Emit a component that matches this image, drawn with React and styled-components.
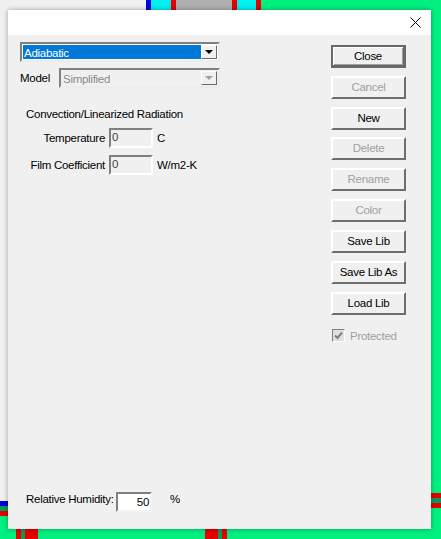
import * as React from 'react';
import styled, { createGlobalStyle, css } from 'styled-components';

const GlobalStyle = createGlobalStyle`
  html, body {
    margin: 0;
    padding: 0;
  }
  body {
    font-family: "Liberation Sans", Arial, sans-serif;
    font-size: 11.5px;
    letter-spacing: -0.28px;
    color: #000;
  }
`;

const strip = (color, x, y, w, h) => `linear-gradient(${color}, ${color}) ${x}px ${y}px / ${w}px ${h}px no-repeat`;

// whatever other windows are behind the dialog, only the edges show
const Desktop = styled.div`
  width: 441px;
  height: 539px;
  overflow: hidden;
  box-sizing: border-box;
  padding: 10px 10px 10px 8px;
  background:
    ${strip('#0000e0', 146, 0, 5, 10)},
    ${strip('#00f0f0', 151, 0, 20, 10)},
    ${strip('#e80000', 171, 0, 5, 10)},
    ${strip('#b0b0b0', 176, 0, 56, 10)},
    ${strip('#e80000', 232, 0, 5, 10)},
    ${strip('#00f0f0', 237, 0, 19, 10)},
    ${strip('#e80000', 256, 0, 5, 10)},
    ${strip('#f0f0f0', 0, 0, 146, 10)},
    ${strip('#0000e0', 0, 501, 8, 5)},
    ${strip('#0a9a5a', 0, 506, 8, 5)},
    ${strip('#e80000', 0, 511, 8, 5)},
    ${strip('#f0f0f0', 0, 0, 8, 501)},
    ${strip('#e80000', 431, 493, 10, 5)},
    ${strip('#0a9a5a', 431, 498, 10, 5)},
    ${strip('#e80000', 431, 503, 10, 5)},
    ${strip('#e80000', 16, 529, 5, 10)},
    ${strip('#0a9a5a', 21, 529, 4, 10)},
    ${strip('#e80000', 25, 529, 8, 10)},
    ${strip('#e80000', 33, 529, 5, 10)},
    ${strip('#e80000', 205, 529, 13, 10)},
    ${strip('#0a9a5a', 218, 529, 4, 10)},
    ${strip('#e80000', 222, 529, 5, 10)},
    #00f080;
`;

const Window = styled.div`
  width: 423px;
  height: 519px;
  display: flex;
  flex-direction: column;
  background: #f0f0f0;
  box-shadow: 0 0 5px rgba(0, 0, 0, 0.35);
`;

const TitleBar = styled.div`
  height: 25px;
  flex: none;
  display: flex;
  justify-content: flex-end;
  align-items: center;
  padding-right: 10px;
  background: #fff;
`;

const Body = styled.div`
  flex: 1;
  display: flex;
  min-height: 0;
  padding: 7px 25px 17px 12px;
`;

const LeftColumn = styled.div`
  flex: 1;
  display: flex;
  flex-direction: column;
`;

const RightColumn = styled.div`
  width: 75px;
  flex: none;
  display: flex;
  flex-direction: column;
  padding-top: 3px;
  gap: 8px;
`;

const sunken = css`
  box-sizing: border-box;
  border: 2px solid;
`;

const Combo = styled.div`
  ${sunken}
  width: ${(p) => p.$width}px;
  height: 20px;
  flex: none;
  display: flex;
  align-items: stretch;
  padding: 1px;
  background: ${(p) => (p.$disabled ? '#f0f0f0' : '#fff')};
  border-color: #808080 #ececec #ececec #808080;
`;

const ComboText = styled.div`
  flex: 1;
  padding-left: 1px;
  line-height: 16px;
  color: ${(p) => (p.$disabled ? '#8a8a8a' : '#fff')};
  background: ${(p) => (p.$disabled ? 'transparent' : '#0078d7')};
`;

const ComboArrow = styled.div`
  width: 16px;
  display: flex;
  align-items: center;
  justify-content: center;
  box-sizing: border-box;
  border: 1px solid;
  border-color: #fff #696969 #696969 #fff;
  background: #f0f0f0;
  &::after {
    content: '';
    border-style: solid;
    border-width: 4px 4px 0;
    border-color: ${(p) => (p.$disabled ? '#a0a0a0' : '#000')} transparent transparent;
  }
`;

const ModelRow = styled.div`
  display: flex;
  align-items: center;
  margin-top: 6px;
`;

const ModelLabel = styled.div`
  width: 39px;
  flex: none;
`;

const Heading = styled.div`
  margin: 18px 0 0 6px;
  line-height: 16px;
`;

const FieldRow = styled.div`
  display: flex;
  align-items: center;
  gap: 4px;
  margin-top: ${(p) => p.$top}px;
`;

const FieldLabel = styled.div`
  width: 85px;
  text-align: right;
  white-space: nowrap;
`;

const Field = styled.div`
  ${sunken}
  width: 44px;
  height: 20px;
  padding-left: 1px;
  line-height: 15px;
  color: #444;
  background: #f0f0f0;
  border-color: #808080 #fff #fff #808080;
`;

const HumidityRow = styled.div`
  display: flex;
  align-items: flex-start;
  line-height: 14px;
  margin: auto 0 0 6px;
`;

const HumidityLabel = styled.div`
  width: 84px;
  white-space: nowrap;
`;

const HumidityInput = styled.div`
  ${sunken}
  width: 36px;
  height: 20px;
  margin-left: 6px;
  padding-right: 1px;
  text-align: right;
  line-height: 17px;
  background: #fff;
  border-color: #808080 #f4f4f4 #f4f4f4 #808080;
`;

const Percent = styled.div`
  margin-left: 18px;
`;

const Button = styled.div`
  box-sizing: border-box;
  width: 75px;
  height: 23px;
  flex: none;
  display: flex;
  align-items: center;
  justify-content: center;
  padding-bottom: 1px;
  white-space: nowrap;
  border: 2px solid;
  border-color: #fff #6e6e6e #6e6e6e #fff;
  background: #f0f0f0;
  color: ${(p) => (p.disabled ? '#a0a0a0' : '#000')};
  margin-top: ${(p) => (p.$tight ? '-1px' : '0')};
  ${(p) => p.$default && css`
    border-color: #696969;
    border-width: 2px 3px 3px 2px;
    box-shadow: inset 1px 1px 0 #fff, inset -1px -1px 0 #a0a0a0;
  `}
`;

const Protected = styled.div`
  display: flex;
  align-items: center;
  gap: 5px;
  margin-top: 6px;
  padding-left: 1px;
  color: #a0a0a0;
  white-space: nowrap;
`;

const CheckBox = styled.div`
  ${sunken}
  width: 13px;
  height: 13px;
  flex: none;
  display: flex;
  background: #e0e0e0;
  border-width: 1px;
  border-color: #808080 #fff #fff #808080;
`;

const buttons = [
  { label: 'Close', $default: true },
  { label: 'Cancel', disabled: true },
  { label: 'New' },
  { label: 'Delete', disabled: true, $tight: true },
  { label: 'Rename', disabled: true },
  { label: 'Color', disabled: true },
  { label: 'Save Lib' },
  { label: 'Save Lib As' },
  { label: 'Load Lib' },
];

const App = () => (
  <Desktop>
    <GlobalStyle />
    <Window>
      <TitleBar>
        <svg width="11" height="11" viewBox="0 0 11 11">
          <path d="M0.5 0.5L10.5 10.5M10.5 0.5L0.5 10.5" stroke="#000" strokeWidth="1" fill="none" />
        </svg>
      </TitleBar>
      <Body>
        <LeftColumn>
          <Combo $width={200}>
            <ComboText>Adiabatic</ComboText>
            <ComboArrow />
          </Combo>
          <ModelRow>
            <ModelLabel>Model</ModelLabel>
            <Combo $width={161} $disabled>
              <ComboText $disabled>Simplified</ComboText>
              <ComboArrow $disabled />
            </Combo>
          </ModelRow>
          <Heading>Convection/Linearized Radiation</Heading>
          <FieldRow $top={6}>
            <FieldLabel>Temperature</FieldLabel>
            <Field>0</Field>
            <span>C</span>
          </FieldRow>
          <FieldRow $top={7}>
            <FieldLabel>Film Coefficient</FieldLabel>
            <Field>0</Field>
            <span>W/m2-K</span>
          </FieldRow>
          <HumidityRow>
            <HumidityLabel>Relative Humidity:</HumidityLabel>
            <HumidityInput>50</HumidityInput>
            <Percent>%</Percent>
          </HumidityRow>
        </LeftColumn>
        <RightColumn>
          {buttons.map(({ label, ...rest }) => (
            <Button key={label} {...rest}>{label}</Button>
          ))}
          <Protected>
            <CheckBox>
              <svg width="11" height="11" viewBox="0 0 11 11">
                <path d="M2 5.5L4.5 8L9 2.5" stroke="#808080" strokeWidth="2" fill="none" />
              </svg>
            </CheckBox>
            Protected
          </Protected>
        </RightColumn>
      </Body>
    </Window>
  </Desktop>
);

export default App;
